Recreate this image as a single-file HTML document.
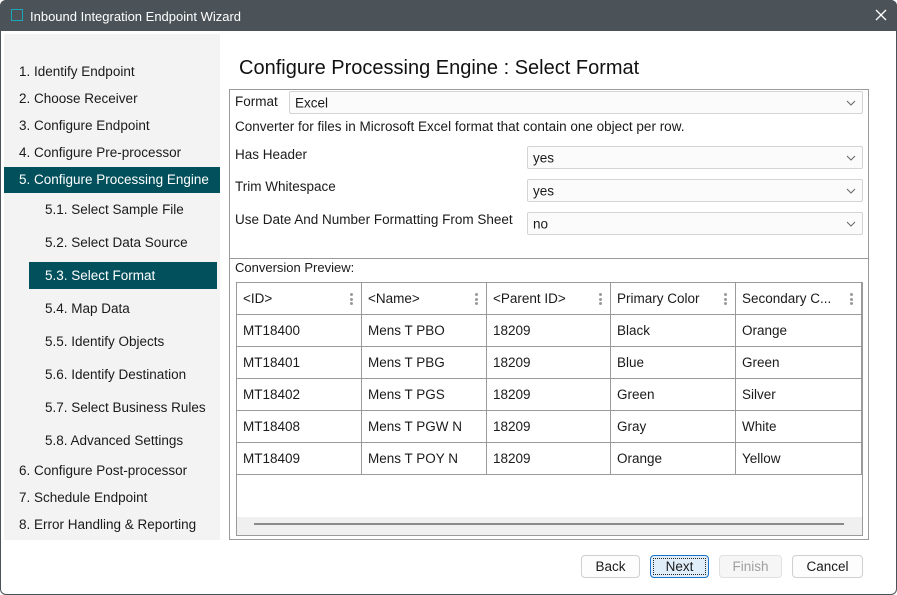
<!DOCTYPE html>
<html><head><meta charset="utf-8"><style>
*{margin:0;padding:0;box-sizing:border-box}
body{width:897px;height:595px;position:relative;overflow:hidden;background:#fff;font-family:"Liberation Sans",Tahoma,sans-serif;font-size:13.5px;color:#1a1a1a}
.a{position:absolute;white-space:nowrap}
.t{line-height:18px}
.combo{position:absolute;border:1px solid #d4d4d4;border-radius:2px;background:#fbfbfb}
.combo span{position:absolute;left:5px;top:50%;transform:translateY(-50%)}
.combo svg{position:absolute;right:6px;top:50%;margin-top:-3px}
.cell{position:absolute;border-right:1px solid #9a9a9a;border-bottom:1px solid #9a9a9a;padding-left:6px;line-height:31px}
.dots{position:absolute;right:8px;top:10px;width:3px}
.dots i{display:block;width:3px;height:3px;background:#9a9a9a;border-radius:50%;margin-bottom:1.5px}
.btn{position:absolute;top:555px;height:23px;border:1px solid #cfcfcf;border-radius:4px;background:#fdfdfd;text-align:center;line-height:21px}
</style></head><body>
<div class="a" style="left:0;top:0;width:897px;height:595px;border:1px solid #4b5358;border-radius:6px"></div>
<div class="a" style="left:0;top:0;width:897px;height:31px;background:#4b5358;border-radius:6px 6px 0 0"></div>
<div class="a" style="left:11px;top:9px;width:12px;height:12px;border:1.5px solid #1ba6bb"></div>
<div class="a t" style="left:30px;top:8px;color:#fff;font-size:13px">Inbound Integration Endpoint Wizard</div>
<svg class="a" style="left:875px;top:9px" width="12" height="12"><path d="M1 1L11 11M11 1L1 11" stroke="#fff" stroke-width="1.3"/></svg>

<div class="a" style="left:4px;top:34px;width:216px;height:506px;background:#f3f3f3"></div>
<div class="a" style="left:4px;top:167px;width:216px;height:26px;background:#02505c"></div>
<div class="a" style="left:29px;top:262px;width:188px;height:27px;background:#02505c"></div>
<div class="a t" style="left:19px;top:63px">1. Identify Endpoint</div>
<div class="a t" style="left:19px;top:90px">2. Choose Receiver</div>
<div class="a t" style="left:19px;top:117px">3. Configure Endpoint</div>
<div class="a t" style="left:19px;top:144px">4. Configure Pre-processor</div>
<div class="a t" style="left:19px;top:171px;color:#fff">5. Configure Processing Engine</div>
<div class="a t" style="left:45px;top:201px">5.1. Select Sample File</div>
<div class="a t" style="left:45px;top:234px">5.2. Select Data Source</div>
<div class="a t" style="left:45px;top:267px;color:#fff">5.3. Select Format</div>
<div class="a t" style="left:45px;top:300px">5.4. Map Data</div>
<div class="a t" style="left:45px;top:333px">5.5. Identify Objects</div>
<div class="a t" style="left:45px;top:366px">5.6. Identify Destination</div>
<div class="a t" style="left:45px;top:399px">5.7. Select Business Rules</div>
<div class="a t" style="left:45px;top:432px">5.8. Advanced Settings</div>
<div class="a t" style="left:19px;top:462px">6. Configure Post-processor</div>
<div class="a t" style="left:19px;top:489px">7. Schedule Endpoint</div>
<div class="a t" style="left:19px;top:516px">8. Error Handling &amp; Reporting</div>

<div class="a" style="left:239px;top:56px;font-size:20px;line-height:24px;color:#111">Configure Processing Engine : Select Format</div>

<div class="a" style="left:229px;top:89px;width:640px;height:451px;border:1px solid #9a9a9a"></div>
<div class="a" style="left:229px;top:258px;width:640px;height:1px;background:#9a9a9a"></div>

<div class="a t" style="left:235px;top:93px">Format</div>
<div class="combo" style="left:289px;top:91px;width:574px;height:23px"><span>Excel</span><svg width="10" height="6"><path d="M1 1L5 5L9 1" stroke="#666" fill="none"/></svg></div>
<div class="a t" style="left:235px;top:118px">Converter for files in Microsoft Excel format that contain one object per row.</div>
<div class="a t" style="left:235px;top:146px">Has Header</div>
<div class="combo" style="left:527px;top:146px;width:336px;height:23px"><span>yes</span><svg width="10" height="6"><path d="M1 1L5 5L9 1" stroke="#666" fill="none"/></svg></div>
<div class="a t" style="left:235px;top:178px">Trim Whitespace</div>
<div class="combo" style="left:527px;top:179px;width:336px;height:23px"><span>yes</span><svg width="10" height="6"><path d="M1 1L5 5L9 1" stroke="#666" fill="none"/></svg></div>
<div class="a t" style="left:235px;top:211px">Use Date And Number Formatting From Sheet</div>
<div class="combo" style="left:527px;top:212px;width:336px;height:23px"><span>no</span><svg width="10" height="6"><path d="M1 1L5 5L9 1" stroke="#666" fill="none"/></svg></div>

<div class="a t" style="left:235px;top:259px;font-size:13px">Conversion Preview:</div>
<div class="a" style="left:236px;top:282px;width:627px;height:254px;border:1px solid #9a9a9a"></div>
<div class="a" style="left:237px;top:517px;width:625px;height:18px;background:#f0f0f0"></div>
<div class="a" style="left:254px;top:523px;width:590px;height:2px;background:#8a8a8a"></div>

<div id="tbl"></div>
<script>
var cols=[237,362,487,611,736,862];
var hdr=["&lt;ID&gt;","&lt;Name&gt;","&lt;Parent ID&gt;","Primary Color","Secondary C..."];
var rows=[["MT18400","Mens T PBO","18209","Black","Orange"],["MT18401","Mens T PBG","18209","Blue","Green"],["MT18402","Mens T PGS","18209","Green","Silver"],["MT18408","Mens T PGW N","18209","Gray","White"],["MT18409","Mens T POY N","18209","Orange","Yellow"]];
var h="";
for(var c=0;c<5;c++){
 var w=cols[c+1]-cols[c];
 h+='<div class="cell" style="left:'+cols[c]+'px;top:283px;width:'+w+'px;height:32px">'+hdr[c]+'<div class="dots"><i></i><i></i><i></i></div></div>';
 for(var r=0;r<5;r++){
  h+='<div class="cell" style="left:'+cols[c]+'px;top:'+(315+r*32)+'px;width:'+w+'px;height:32px">'+rows[r][c]+'</div>';
 }
}
document.getElementById('tbl').innerHTML=h;
</script>

<div class="btn" style="left:581px;width:59px">Back</div>
<div class="btn" style="left:650px;width:59px;border-color:#1a73c8;background:#e0eefa"><div style="position:absolute;left:2px;top:2px;right:2px;bottom:2px;border:1px dotted #222"></div>Next</div>
<div class="btn" style="left:719px;width:63px;color:#a0a0a0;background:#f6f6f6;border-color:#e0e0e0">Finish</div>
<div class="btn" style="left:792px;width:71px">Cancel</div>
</body></html>
